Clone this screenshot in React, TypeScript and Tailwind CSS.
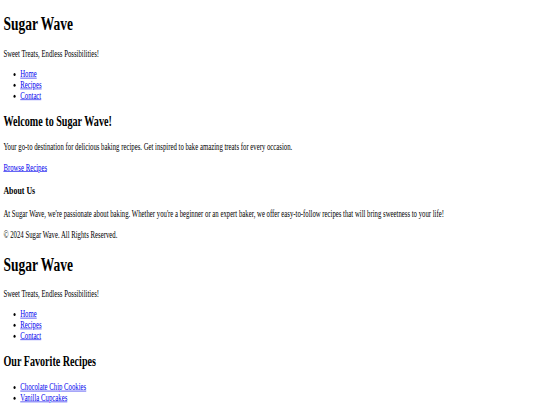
import React from "react";

const H1 = ({ children }: { children: React.ReactNode }) => (
  <h1 className="text-[32px] font-bold my-[21.44px]">{children}</h1>
);
const H2 = ({ children }: { children: React.ReactNode }) => (
  <h2 className="text-[24px] font-bold my-[19.92px]">{children}</h2>
);
const H3 = ({ children }: { children: React.ReactNode }) => (
  <h3 className="text-[18.72px] font-bold my-[18.72px]">{children}</h3>
);
const P = ({ children }: { children: React.ReactNode }) => <p className="my-4">{children}</p>;
const A = ({ children }: { children: React.ReactNode }) => (
  <a href="#" className="text-[#0000EE] underline">
    {children}
  </a>
);
const UL = ({ items }: { items: string[] }) => (
  <ul className="my-4 pl-10 list-disc">
    {items.map((i) => (
      <li key={i}>
        <A>{i}</A>
      </li>
    ))}
  </ul>
);

const Header = () => (
  <header>
    <H1>Sugar Wave</H1>
    <P>Sweet Treats, Endless Possibilities!</P>
    <nav>
      <UL items={["Home", "Recipes", "Contact"]} />
    </nav>
  </header>
);

export default function App() {
  return (
    <div className="w-[540px] h-[405px] overflow-hidden bg-white">
      <div className="flow-root w-[1280px] px-2 origin-top-left scale-x-[0.421875] scale-y-[0.603] text-black text-[16px] leading-[normal] font-['Liberation_Serif',serif]">
        <Header />
        <section>
          <H2>Welcome to Sugar Wave!</H2>
          <P>Your go-to destination for delicious baking recipes. Get inspired to bake amazing treats for every occasion.</P>
          <A>Browse Recipes</A>
        </section>
        <section>
          <H3>About Us</H3>
          <P>
            At Sugar Wave, we're passionate about baking. Whether you're a beginner or an expert baker, we offer easy-to-follow recipes that will bring sweetness to your life!
          </P>
        </section>
        <footer>
          <P>© 2024 Sugar Wave. All Rights Reserved.</P>
        </footer>
        <Header />
        <section>
          <H2>Our Favorite Recipes</H2>
          <UL items={["Chocolate Chip Cookies", "Vanilla Cupcakes", "Lemon Drizzle Cake", "Red Velvet Cake"]} />
        </section>
      </div>
    </div>
  );
}
